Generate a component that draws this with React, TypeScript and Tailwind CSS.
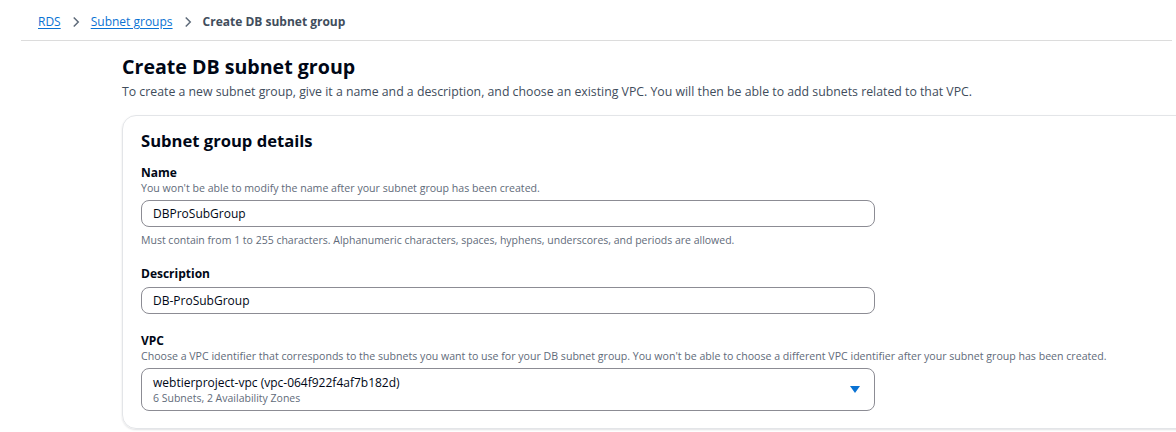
import React from 'react';

const ChevronRight: React.FC = () => (
  <svg width="12" height="12" viewBox="0 0 16 16" fill="none" stroke="#5f6b7a" strokeWidth="2">
    <path d="M5 2l6 6-6 6" />
  </svg>
);

const Field: React.FC<{ label: string; hint?: string; children: React.ReactNode; after?: string }> = ({
  label,
  hint,
  children,
  after,
}) => (
  <div className="flex flex-col">
    <div className="text-[12px] font-bold leading-[16px] text-[#000716]">{label}</div>
    {hint && <div className="text-[10.6px] leading-[14px] text-[#5f6b7a]">{hint}</div>}
    <div className="mt-[5px]">{children}</div>
    {after && <div className="mt-[6px] text-[10.5px] leading-[14px] text-[#5f6b7a]">{after}</div>}
  </div>
);

const App: React.FC = () => {
  return (
    <div
      className="w-[1176px] h-[432px] overflow-hidden bg-white"
      style={{ fontFamily: '"Open Sans", "Noto Sans", Arial, sans-serif' }}
    >
      <nav className="flex items-center h-[41px] pt-[4px] ml-[21px] mr-[4px] pl-[17px] border-b border-[#dcdcdc] text-[12px]">
        <a className="text-[#0972d3] underline underline-offset-2">RDS</a>
        <span className="mx-[9px]"><ChevronRight /></span>
        <a className="text-[#0972d3] underline underline-offset-2">Subnet groups</a>
        <span className="mx-[9px]"><ChevronRight /></span>
        <span className="font-bold text-[#414d5c]">Create DB subnet group</span>
      </nav>

      <div className="ml-[122px]">
        <h1 className="mt-[13px] text-[19.6px] font-bold leading-[26px] text-[#000716]">Create DB subnet group</h1>
        <p className="mt-[4px] text-[12.3px] leading-[16px] text-[#414d5c]">
          To create a new subnet group, give it a name and a description, and choose an existing VPC. You will then be able to add subnets related to that VPC.
        </p>

        <div className="mt-[15px] w-[1080px] rounded-[14px] border border-[#e3e5e8] shadow-[0_1px_2px_rgba(0,7,22,0.12)] pl-[18px] pt-[13px] pb-[17px]">
          <h2 className="text-[16.6px] font-bold leading-[24px] text-[#000716]">Subnet group details</h2>
          <div className="mt-[12px] flex flex-col gap-[19px]">
            <Field
              label="Name"
              hint="You won't be able to modify the name after your subnet group has been created."
              after="Must contain from 1 to 255 characters. Alphanumeric characters, spaces, hyphens, underscores, and periods are allowed."
            >
              <div className="w-[734px] h-[27px] rounded-[8px] border-[1.5px] border-[#8c8c94] flex items-center px-[11px] text-[12px] text-[#000716]">
                DBProSubGroup
              </div>
            </Field>
            <Field label="Description">
              <div className="w-[734px] h-[27px] rounded-[8px] border-[1.5px] border-[#8c8c94] flex items-center px-[11px] text-[12px] text-[#000716]">
                DB-ProSubGroup
              </div>
            </Field>
            <Field
              label="VPC"
              hint="Choose a VPC identifier that corresponds to the subnets you want to use for your DB subnet group. You won't be able to choose a different VPC identifier after your subnet group has been created."
            >
              <div className="w-[734px] h-[43px] rounded-[8px] border-[1.5px] border-[#8c8c94] flex items-center justify-between pl-[11px] pr-[14px]">
                <div className="flex flex-col">
                  <span className="text-[12px] leading-[16px] text-[#000716]">webtierproject-vpc (vpc-064f922f4af7b182d)</span>
                  <span className="text-[10.5px] leading-[14px] text-[#5f6b7a]">6 Subnets, 2 Availability Zones</span>
                </div>
                <svg width="10" height="8" viewBox="0 0 10 8">
                  <path d="M0 0h10L5 7z" fill="#0972d3" />
                </svg>
              </div>
            </Field>
          </div>
        </div>
      </div>
    </div>
  );
};

export default App;
